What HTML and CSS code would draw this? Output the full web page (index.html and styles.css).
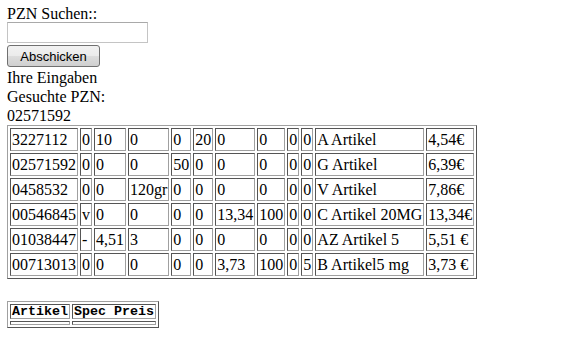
FILE: index.html
```html
<!DOCTYPE html>
<html lang="de">
<head>
    <meta charset="UTF-8">
    <title>PZN Suche</title>
    <link rel="stylesheet" href="styles.css">
</head>
<body>
    <form class="search-form">
        <div class="form-label">PZN Suchen::</div>
        <input type="text" class="pzn-input" name="pzn">
        <button type="submit" class="btn">Abschicken</button>
    </form>

    <div class="line">Ihre Eingaben</div>
    <div class="line">Gesuchte PZN:</div>
    <div class="line">02571592</div>

    <table class="grid">
        <tr><td>3227112</td><td>0</td><td>10</td><td>0</td><td>0</td><td>20</td><td>0</td><td>0</td><td>0</td><td>0</td><td>A Artikel</td><td>4,54€</td></tr>
        <tr><td>02571592</td><td>0</td><td>0</td><td>0</td><td>50</td><td>0</td><td>0</td><td>0</td><td>0</td><td>0</td><td>G Artikel</td><td>6,39€</td></tr>
        <tr><td>0458532</td><td>0</td><td>0</td><td>120gr</td><td>0</td><td>0</td><td>0</td><td>0</td><td>0</td><td>0</td><td>V Artikel</td><td>7,86€</td></tr>
        <tr><td>00546845</td><td>v</td><td>0</td><td>0</td><td>0</td><td>0</td><td>13,34</td><td>100</td><td>0</td><td>0</td><td>C Artikel 20MG</td><td>13,34€</td></tr>
        <tr><td>01038447</td><td>-</td><td>4,51</td><td>3</td><td>0</td><td>0</td><td>0</td><td>0</td><td>0</td><td>0</td><td>AZ Artikel 5</td><td>5,51 €</td></tr>
        <tr><td>00713013</td><td>0</td><td>0</td><td>0</td><td>0</td><td>0</td><td>3,73</td><td>100</td><td>0</td><td>5</td><td>B Artikel5 mg</td><td>3,73 €</td></tr>
    </table>

    <table class="grid grid-spec">
        <tr><th>Artikel</th><th>Spec Preis</th></tr>
        <tr><td></td><td></td></tr>
    </table>
</body>
</html>
```

FILE: styles.css
```css
body {
    margin: 5px 7px;
    font-family: 'Liberation Serif', 'Times New Roman', serif;
    font-size: 16px;
    line-height: 19px;
    color: #000;
    background: #fff;
}

.search-form {
    margin: 0;
}

.form-label {
    line-height: 17px;
}

.line {
    height: 19px;
}

.pzn-input {
    display: block;
    width: 141px;
    height: 21px;
    margin: 0 0 2px;
    padding: 0 2px;
    box-sizing: border-box;
    border: 1px solid #c4c4c4;
    border-top-color: #a9a9a9;
    font-size: 13px;
}

.btn {
    display: block;
    width: 93px;
    height: 22px;
    margin: 0 0 1px;
    padding: 0;
    border: 1px solid #707070;
    border-radius: 3px;
    background: linear-gradient(#f2f2f2 0%, #ebebeb 50%, #dddddd 51%, #cfcfcf 100%);
    font-family: 'Liberation Sans', Arial, sans-serif;
    font-size: 13px;
    color: #000;
}

.grid {
    border-collapse: separate;
    border-spacing: 2px;
    border: 1px solid;
    border-color: #a0a0a0 #555 #555 #a0a0a0;
}

.grid td,
.grid th {
    border: 1px solid;
    border-color: #555 #a0a0a0 #a0a0a0 #555;
    padding: 1px;
    line-height: 19px;
    text-align: left;
    white-space: nowrap;
}

.grid-spec {
    margin-top: 22px;
}

.grid-spec th {
    font-family: 'Liberation Mono', 'Courier New', monospace;
    font-size: 13.33px;
    font-weight: bold;
    line-height: 11px;
}

.grid-spec td {
    padding: 0;
    height: 2px;
    line-height: 0;
}
```
